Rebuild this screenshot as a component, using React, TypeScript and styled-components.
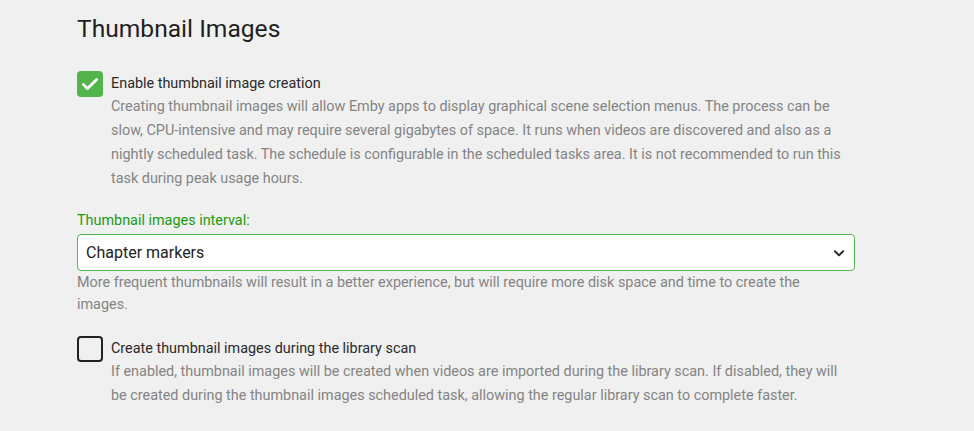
import React from "react";
import styled, { createGlobalStyle } from "styled-components";

const GlobalStyle = createGlobalStyle`
  html, body {
    margin: 0;
    padding: 0;
    background: #f0f0f0;
    font-family: Roboto, "Noto Sans", sans-serif;
    color: #222;
  }
`;

const Page = styled.div`
  padding: 11px 0 0 77px;
  width: 778px;
`;

const Heading = styled.h2`
  margin: 0 0 24px;
  font-size: 24.6px;
  font-weight: 400;
  line-height: 36px;
  color: #1f1f1f;
`;

const CheckRow = styled.label<{ gap?: number }>`
  display: flex;
  align-items: flex-start;
  margin-bottom: ${p => p.gap ?? 21}px;
`;

const Box = styled.span<{ checked?: boolean }>`
  flex: none;
  width: ${p => (p.checked ? "26px" : "22px")};
  height: ${p => (p.checked ? "26px" : "22px")};
  margin-right: 8px;
  border-radius: 4px;
  background: ${p => (p.checked ? "#52b54b" : "transparent")};
  border: ${p => (p.checked ? "none" : "2px solid #222")};
  display: flex;
  align-items: center;
  justify-content: center;
`;

const CheckText = styled.div`
  padding-top: 3px;
`;

const CheckLabel = styled.div`
  font-size: 14.4px;
  line-height: 20px;
  color: #2a2a2a;
`;

const Description = styled.div<{ tight?: boolean }>`
  font-size: 14.4px;
  line-height: ${p => (p.tight ? "22px" : "24px")};
  color: #848484;
  margin-top: 1px;
  max-width: ${p => (p.tight ? "740px" : "none")};
`;

const Field = styled.div`
  margin-bottom: 20px;
`;

const FieldLabel = styled.div`
  font-size: 14.4px;
  line-height: 18px;
  color: #1a9b0f;
  margin-bottom: 4px;
`;

const SelectBox = styled.div`
  height: 35px;
  border: 1px solid #52b54b;
  border-radius: 4px;
  background: #fff;
  display: flex;
  align-items: center;
  justify-content: space-between;
  padding: 0 8px;
  font-size: 16px;
  color: #222;
`;

const Chevron = () => (
  <svg width="14" height="14" viewBox="0 0 24 24" fill="none" stroke="#222" strokeWidth="3.2" strokeLinecap="round" strokeLinejoin="round">
    <path d="M5 9l7 7 7-7" />
  </svg>
);

const Tick = () => (
  <svg width="20" height="20" viewBox="0 0 24 24" fill="none" stroke="#fff" strokeWidth="3.4" strokeLinecap="round" strokeLinejoin="round">
    <path d="M4 12.5l5 5L20 6.5" />
  </svg>
);

export default function App() {
  return (
    <>
      <GlobalStyle />
      <Page>
        <Heading>Thumbnail Images</Heading>
        <CheckRow>
          <Box checked>
            <Tick />
          </Box>
          <CheckText>
            <CheckLabel>Enable thumbnail image creation</CheckLabel>
            <Description>
              Creating thumbnail images will allow Emby apps to display graphical scene selection menus. The process can be
              slow, CPU-intensive and may require several gigabytes of space. It runs when videos are discovered and also as a
              nightly scheduled task. The schedule is configurable in the scheduled tasks area. It is not recommended to run this
              task during peak usage hours.
            </Description>
          </CheckText>
        </CheckRow>
        <Field>
          <FieldLabel>Thumbnail images interval:</FieldLabel>
          <SelectBox>
            <span>Chapter markers</span>
            <Chevron />
          </SelectBox>
          <Description tight>
            More frequent thumbnails will result in a better experience, but will require more disk space and time to create the
            images.
          </Description>
        </Field>
        <CheckRow gap={24}>
          <Box>{null}</Box>
          <CheckText>
            <CheckLabel>Create thumbnail images during the library scan</CheckLabel>
            <Description>
              If enabled, thumbnail images will be created when videos are imported during the library scan. If disabled, they will
              be created during the thumbnail images scheduled task, allowing the regular library scan to complete faster.
            </Description>
          </CheckText>
        </CheckRow>
      </Page>
    </>
  );
}
